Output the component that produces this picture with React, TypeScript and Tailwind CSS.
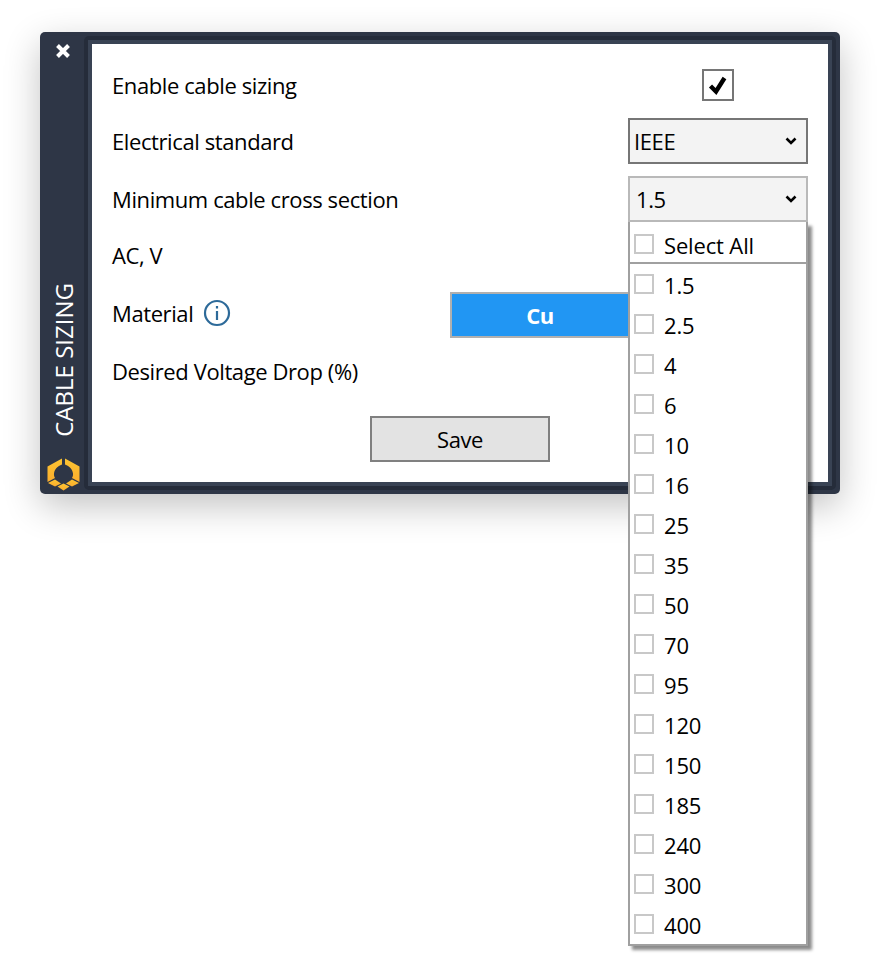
const font = { fontFamily: '"Open Sans", "Noto Sans", sans-serif' };
const options = ["1.5", "2.5", "4", "6", "10", "16", "25", "35", "50", "70", "95", "120", "150", "185", "240", "300", "400"];

function Chevron() {
  return (
    <svg width="12" height="8" viewBox="0 0 12 8" fill="none" stroke="#000" strokeWidth="2.6">
      <path d="M1.5 1.5 6 6l4.5-4.5" />
    </svg>
  );
}

function Logo() {
  return (
    <svg width="33" height="33" viewBox="0 0 33 33">
      <defs>
        <linearGradient id="g" x1="0" y1="0" x2="0" y2="1">
          <stop offset="0" stopColor="#fcc431" />
          <stop offset="1" stopColor="#fbad2e" />
        </linearGradient>
      </defs>
      <g fill="url(#g)">
        <path d="M15 0.5V6.5C10.5 8 7.5 11.5 7 15.5C6.8 17 7.2 18.5 8 20L0.5 24V8.5Z" />
        <path d="M18 0.5V6.5C22.5 8 25.5 11.5 26 15.5C26.2 17 25.8 18.5 25 20L32.5 24V8.5Z" />
        <path d="M1 25 8 21.5 14 25.5 8 28.5Z" />
        <path d="M10.5 28.5 16.5 25.5 22.5 28.5 16.5 32.5Z" />
        <path d="M19 25.5 25 21.5 32 25 25 28.5Z" />
      </g>
    </svg>
  );
}

function CheckRow({ label, header }: { label: string; header?: boolean }) {
  return (
    <div className={`flex items-center pl-[4px] gap-[10px] ${header ? "h-[42px] pt-[4px] border-b-2 border-[#a0a0a0]" : "h-[40px]"}`}>
      <span className="w-[20px] h-[20px] border-2 border-[#c8c8c8] bg-white" />
      <span className="mt-[2px] tracking-[-0.15px]">{label}</span>
    </div>
  );
}

export default function App() {
  return (
    <div className="min-h-[954px] bg-white pt-[32px] pl-[40px] text-[22px] text-black tracking-[-0.4px]" style={font}>
      <div className="w-[800px] h-[462px] flex rounded-[5px] bg-[#2e3646] shadow-[0_12px_36px_rgba(0,0,0,0.24)]">
        <aside className="w-[44px] flex flex-col items-center pt-[12px] pb-[3px] text-white">
          <svg className="ml-[2px]" width="14" height="14" viewBox="0 0 14 14" fill="none" stroke="#fff" strokeWidth="4">
            <path d="M1.5 1.5l11 11M12.5 1.5l-11 11" />
          </svg>
          <div className="mt-auto mb-[21px] ml-[3px] [writing-mode:vertical-rl] rotate-180 text-[24px] font-medium tracking-normal leading-none whitespace-nowrap">CABLE SIZING</div>
          <div className="ml-[2px] flex">
            <Logo />
          </div>
        </aside>
        <div className="flex-1 mt-[4px] mr-[4px] mb-[4px] rounded-[5px] bg-[#252c3a] p-[4px]">
          <div className="h-full bg-[#394354] p-[4px]">
            <main className="h-full bg-white pt-[20px] pl-[20px] pr-[20px] flex flex-col gap-[12px]">
              <div className="h-[42px] flex items-center">
                <span>Enable cable sizing</span>
                <span className="ml-auto mr-[74px] w-[32px] h-[32px] border-2 border-[#767676] flex items-center justify-center">
                  <svg width="20" height="20" viewBox="0 0 20 20" fill="none" stroke="#000" strokeWidth="4.4">
                    <path d="M2.5 11 8 16.5 16.5 3" />
                  </svg>
                </span>
              </div>
              <div className="h-[46px] flex items-center justify-between">
                <span>Electrical standard</span>
                <button className="w-[180px] h-[46px] border-2 border-[#767676] bg-[#f3f3f3] flex items-center justify-between pl-[4px] pr-[9px]">
                  <span>IEEE</span>
                  <Chevron />
                </button>
              </div>
              <div className="h-[46px] flex items-center justify-between">
                <span>Minimum cable cross section</span>
                <div className="relative w-[180px] h-[46px]">
                  <button className="w-full h-full border-2 border-[#b9b9b9] bg-[#f3f3f3] flex items-center justify-between pl-[6px] pr-[9px]">
                    <span>1.5</span>
                    <Chevron />
                  </button>
                  <div className="absolute z-10 left-0 top-[46px] w-[180px] h-[724px] border-2 border-t-0 border-[#a0a0a0] bg-white shadow-[4px_4px_3px_rgba(0,0,0,0.45)]">
                    <CheckRow label="Select All" header />
                    {options.map((o) => (
                      <CheckRow key={o} label={o} />
                    ))}
                  </div>
                </div>
              </div>
              <div className="h-[46px] flex items-center pb-[4px]">
                <span>AC, V</span>
              </div>
              <div className="h-[46px] flex items-center">
                <div className="flex items-center pb-[4px]">
                  <span>Material</span>
                  <svg className="ml-[10px]" width="28" height="28" viewBox="0 0 28 28" fill="none" stroke="#2d6a99" strokeWidth="2.2">
                    <circle cx="14" cy="14" r="12" />
                    <path d="M14 12v9M14 7v2.4" />
                  </svg>
                </div>
                <button className="ml-auto mr-[178px] w-[180px] h-[46px] border-2 border-[#b0b0b0] bg-[#2196f3] text-white font-bold">Cu</button>
              </div>
              <div className="h-[46px] flex items-center pb-[4px]">
                <span>Desired Voltage Drop (%)</span>
              </div>
              <button className="self-center w-[180px] h-[46px] mt-[8px] border-2 border-[#808080] bg-[#e3e3e3]">Save</button>
            </main>
          </div>
        </div>
      </div>
    </div>
  );
}
